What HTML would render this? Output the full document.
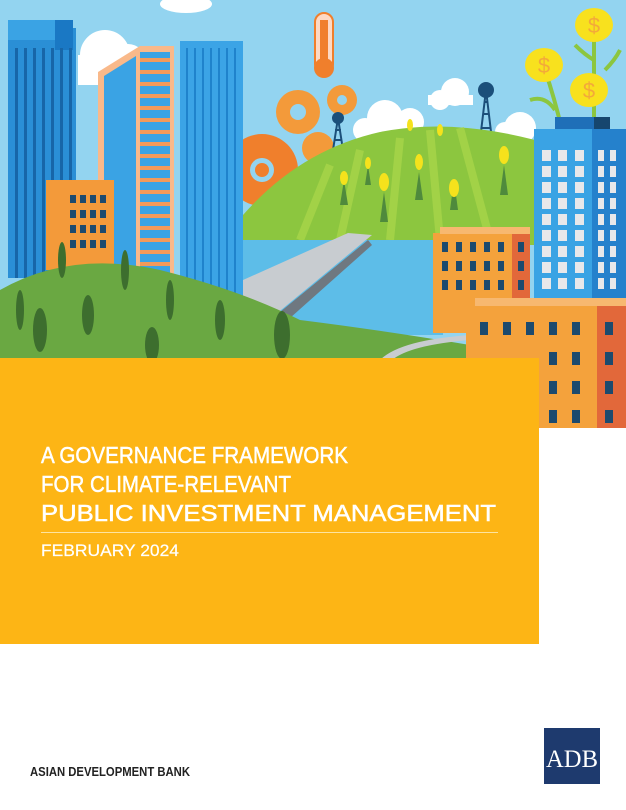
<!DOCTYPE html>
<html><head><meta charset="utf-8"><style>
html,body{margin:0;padding:0;background:#fff}
body{width:626px;height:810px;position:relative;overflow:hidden;font-family:"Liberation Sans",sans-serif}
svg{position:absolute;left:0;top:0}
</style></head><body>
<svg width="626" height="810" viewBox="0 0 626 810">
<rect x="0" y="0" width="626" height="430" fill="#93d4f0"/>
<rect x="539" y="428" width="87" height="382" fill="#fff"/>
<g fill="#fff">
<ellipse cx="186" cy="4" rx="26" ry="9"/>
<circle cx="105" cy="55" r="25"/><circle cx="128" cy="62" r="18"/><rect x="78" y="55" width="70" height="30"/>
<circle cx="455" cy="92" r="14"/><circle cx="440" cy="100" r="10"/><rect x="428" y="95" width="45" height="10"/>
<circle cx="385" cy="118" r="18"/><circle cx="410" cy="122" r="14"/><circle cx="365" cy="130" r="12"/>
<circle cx="520" cy="128" r="16"/><circle cx="505" cy="132" r="10"/>
</g>
<g fill="#f39a3a">
<circle cx="298" cy="112" r="22"/><circle cx="342" cy="100" r="15"/><circle cx="318" cy="148" r="16"/>
</g>
<circle cx="298" cy="112" r="8" fill="#93d4f0"/><circle cx="342" cy="100" r="5" fill="#93d4f0"/>
<circle cx="262" cy="170" r="36" fill="#f07f2c"/><circle cx="262" cy="170" r="12" fill="#93d4f0"/><circle cx="262" cy="170" r="7" fill="#f07f2c"/>
<rect x="315" y="13" width="18" height="60" rx="9" fill="#fdd9c4" stroke="#f07f2c" stroke-width="2"/>
<rect x="320" y="20" width="8" height="45" fill="#f07f2c"/><circle cx="324" cy="68" r="10" fill="#f07f2c"/>
<g stroke="#1b4f7a" stroke-width="2" fill="none">
<path d="M333 150 L338 118 L343 150 M334 140 H342 M335 130 H341"/>
<path d="M480 140 L486 90 L492 140 M481 128 H491 M483 114 H489 M484 102 H488"/>
</g>
<circle cx="338" cy="118" r="6" fill="#1b4f7a"/><circle cx="486" cy="90" r="8" fill="#1b4f7a"/>
<path d="M243 215 Q300 150 380 132 Q450 118 535 140 L535 245 L243 245 Z" fill="#8cc63f"/>
<g stroke="#a8d64a" stroke-width="8" fill="none" opacity=".8">
<path d="M300 240 L330 165"/><path d="M340 240 L360 150"/><path d="M390 240 L400 138"/><path d="M440 240 L430 130"/><path d="M490 240 L460 128"/>
</g>
<g fill="#4f8a3c">
<path d="M340 205 l4 -25 l4 25z"/><path d="M380 222 l4 -30 l4 30z"/><path d="M415 200 l4 -28 l4 28z"/><path d="M450 210 l4 -30 l4 30z"/><path d="M500 195 l4 -30 l4 30z"/><path d="M365 185 l3 -20 l3 20z"/>
</g>
<g fill="#f5e21c">
<ellipse cx="344" cy="178" rx="4" ry="7"/><ellipse cx="384" cy="182" rx="5" ry="9"/><ellipse cx="419" cy="162" rx="4" ry="8"/><ellipse cx="454" cy="188" rx="5" ry="9"/><ellipse cx="504" cy="155" rx="5" ry="9"/><ellipse cx="368" cy="163" rx="3" ry="6"/><ellipse cx="440" cy="130" rx="3" ry="6"/><ellipse cx="410" cy="125" rx="3" ry="6"/>
</g>
<rect x="243" y="240" width="200" height="95" fill="#5dbde8"/>
<path d="M243 280 L348 233 L372 235 L275 315 L243 318 Z" fill="#c8ccd0"/>
<path d="M280 312 L368 240 L372 245 L290 318 Z" fill="#6f7880"/>
<g stroke="#8cc63f" stroke-width="4" fill="none"><path d="M562 130 Q555 100 545 70"/><path d="M594 125 L594 35"/><path d="M530 100 Q545 95 555 110"/><path d="M605 70 Q615 60 620 50"/><path d="M575 45 Q585 55 594 60"/></g>
<g fill="#f8e11e"><ellipse cx="594" cy="25" rx="19" ry="17"/><ellipse cx="544" cy="65" rx="19" ry="17"/><ellipse cx="589" cy="90" rx="19" ry="17"/></g>
<g fill="#f3a93a" font-size="22" font-family="Liberation Sans" text-anchor="middle"><text x="594" y="33">$</text><text x="544" y="73">$</text><text x="589" y="98">$</text></g>
<rect x="8" y="28" width="68" height="250" fill="#2a8fd6"/>
<rect x="8" y="20" width="62" height="20" fill="#3aa3e4"/><rect x="55" y="20" width="18" height="30" fill="#1a78c4"/>
<g fill="#1766a8"><rect x="15" y="48" width="3" height="230"/><rect x="24" y="48" width="3" height="230"/><rect x="33" y="48" width="3" height="230"/><rect x="42" y="48" width="3" height="230"/><rect x="51" y="48" width="3" height="230"/><rect x="60" y="48" width="3" height="230"/><rect x="69" y="48" width="3" height="230"/></g>
<path d="M98 72 L140 46 L174 46 L174 285 L98 285 Z" fill="#f9b98a"/>
<path d="M104 76 L136 56 L136 285 L104 285 Z" fill="#3aa3e4"/>
<rect x="140" y="52" width="30" height="233" fill="#3aa3e4"/>
<g fill="#f39a5a"><rect x="140" y="58" width="30" height="4"/><rect x="140" y="70" width="30" height="4"/><rect x="140" y="82" width="30" height="4"/><rect x="140" y="94" width="30" height="4"/><rect x="140" y="106" width="30" height="4"/><rect x="140" y="118" width="30" height="4"/><rect x="140" y="130" width="30" height="4"/><rect x="140" y="142" width="30" height="4"/><rect x="140" y="154" width="30" height="4"/><rect x="140" y="166" width="30" height="4"/><rect x="140" y="178" width="30" height="4"/><rect x="140" y="190" width="30" height="4"/><rect x="140" y="202" width="30" height="4"/><rect x="140" y="214" width="30" height="4"/><rect x="140" y="226" width="30" height="4"/><rect x="140" y="238" width="30" height="4"/><rect x="140" y="250" width="30" height="4"/><rect x="140" y="262" width="30" height="4"/></g>
<rect x="180" y="41" width="63" height="270" fill="#3ba4e6"/>
<g fill="#1f83cc"><rect x="186" y="48" width="2" height="263"/><rect x="194" y="48" width="2" height="263"/><rect x="202" y="48" width="2" height="263"/><rect x="210" y="48" width="2" height="263"/><rect x="218" y="48" width="2" height="263"/><rect x="226" y="48" width="2" height="263"/><rect x="234" y="48" width="2" height="263"/></g>
<rect x="46" y="180" width="68" height="90" fill="#f39a3a"/>
<g fill="#1c4a6e"><rect x="70" y="195" width="6" height="8"/><rect x="80" y="195" width="6" height="8"/><rect x="90" y="195" width="6" height="8"/><rect x="100" y="195" width="6" height="8"/><rect x="70" y="210" width="6" height="8"/><rect x="80" y="210" width="6" height="8"/><rect x="90" y="210" width="6" height="8"/><rect x="100" y="210" width="6" height="8"/><rect x="70" y="225" width="6" height="8"/><rect x="80" y="225" width="6" height="8"/><rect x="90" y="225" width="6" height="8"/><rect x="100" y="225" width="6" height="8"/><rect x="70" y="240" width="6" height="8"/><rect x="80" y="240" width="6" height="8"/><rect x="90" y="240" width="6" height="8"/><rect x="100" y="240" width="6" height="8"/></g>
<path d="M0 290 Q70 250 160 270 Q240 290 300 320 Q380 330 470 345 L470 360 L0 360 Z" fill="#6aa842"/>
<path d="M380 360 Q400 340 470 335 L470 340 Q410 345 392 360Z" fill="#c8ccd0"/>
<g fill="#3d6e2e">
<ellipse cx="40" cy="330" rx="7" ry="22"/><ellipse cx="88" cy="315" rx="6" ry="20"/><ellipse cx="152" cy="345" rx="7" ry="18"/><ellipse cx="282" cy="335" rx="8" ry="24"/><ellipse cx="20" cy="310" rx="4" ry="20"/><ellipse cx="125" cy="270" rx="4" ry="20"/><ellipse cx="170" cy="300" rx="4" ry="20"/><ellipse cx="220" cy="320" rx="5" ry="20"/><ellipse cx="62" cy="260" rx="4" ry="18"/>
</g>
<rect x="555" y="117" width="55" height="14" fill="#1f6fb8"/><rect x="594" y="117" width="16" height="14" fill="#16466e"/>
<rect x="534" y="129" width="92" height="175" fill="#3aa3e4"/><rect x="592" y="129" width="34" height="175" fill="#2581cc"/>
<g fill="#e8e8ea">
<rect x="542" y="150" width="9" height="11"/><rect x="558" y="150" width="9" height="11"/><rect x="575" y="150" width="9" height="11"/><rect x="542" y="166" width="9" height="11"/><rect x="558" y="166" width="9" height="11"/><rect x="575" y="166" width="9" height="11"/><rect x="542" y="182" width="9" height="11"/><rect x="558" y="182" width="9" height="11"/><rect x="575" y="182" width="9" height="11"/><rect x="542" y="198" width="9" height="11"/><rect x="558" y="198" width="9" height="11"/><rect x="575" y="198" width="9" height="11"/><rect x="542" y="214" width="9" height="11"/><rect x="558" y="214" width="9" height="11"/><rect x="575" y="214" width="9" height="11"/><rect x="542" y="230" width="9" height="11"/><rect x="558" y="230" width="9" height="11"/><rect x="575" y="230" width="9" height="11"/><rect x="542" y="246" width="9" height="11"/><rect x="558" y="246" width="9" height="11"/><rect x="575" y="246" width="9" height="11"/><rect x="542" y="262" width="9" height="11"/><rect x="558" y="262" width="9" height="11"/><rect x="575" y="262" width="9" height="11"/><rect x="542" y="278" width="9" height="11"/><rect x="558" y="278" width="9" height="11"/><rect x="575" y="278" width="9" height="11"/>
<rect x="598" y="150" width="6" height="11"/><rect x="610" y="150" width="6" height="11"/><rect x="598" y="166" width="6" height="11"/><rect x="610" y="166" width="6" height="11"/><rect x="598" y="182" width="6" height="11"/><rect x="610" y="182" width="6" height="11"/><rect x="598" y="198" width="6" height="11"/><rect x="610" y="198" width="6" height="11"/><rect x="598" y="214" width="6" height="11"/><rect x="610" y="214" width="6" height="11"/><rect x="598" y="230" width="6" height="11"/><rect x="610" y="230" width="6" height="11"/><rect x="598" y="246" width="6" height="11"/><rect x="610" y="246" width="6" height="11"/><rect x="598" y="262" width="6" height="11"/><rect x="610" y="262" width="6" height="11"/><rect x="598" y="278" width="6" height="11"/><rect x="610" y="278" width="6" height="11"/>
</g>
<rect x="433" y="233" width="97" height="100" fill="#f4a23c"/><rect x="512" y="233" width="18" height="100" fill="#e2683a"/>
<rect x="440" y="227" width="90" height="7" fill="#f7b870"/>
<g fill="#1c4a6e"><rect x="442" y="242" width="6" height="10"/><rect x="456" y="242" width="6" height="10"/><rect x="470" y="242" width="6" height="10"/><rect x="484" y="242" width="6" height="10"/><rect x="498" y="242" width="6" height="10"/><rect x="518" y="242" width="6" height="10"/><rect x="442" y="261" width="6" height="10"/><rect x="456" y="261" width="6" height="10"/><rect x="470" y="261" width="6" height="10"/><rect x="484" y="261" width="6" height="10"/><rect x="498" y="261" width="6" height="10"/><rect x="518" y="261" width="6" height="10"/><rect x="442" y="280" width="6" height="10"/><rect x="456" y="280" width="6" height="10"/><rect x="470" y="280" width="6" height="10"/><rect x="484" y="280" width="6" height="10"/><rect x="498" y="280" width="6" height="10"/><rect x="518" y="280" width="6" height="10"/></g>
<rect x="466" y="300" width="160" height="128" fill="#f4a23c"/><rect x="597" y="300" width="29" height="128" fill="#e2683a"/>
<rect x="475" y="298" width="151" height="8" fill="#f7b870"/>
<g fill="#1c4a6e">
<rect x="480" y="322" width="8" height="13"/><rect x="503" y="322" width="8" height="13"/><rect x="526" y="322" width="8" height="13"/><rect x="549" y="322" width="8" height="13"/><rect x="572" y="322" width="8" height="13"/><rect x="605" y="322" width="8" height="13"/>
<rect x="549" y="352" width="8" height="13"/><rect x="572" y="352" width="8" height="13"/><rect x="605" y="352" width="8" height="13"/>
<rect x="549" y="381" width="8" height="13"/><rect x="572" y="381" width="8" height="13"/><rect x="605" y="381" width="8" height="13"/>
<rect x="549" y="410" width="8" height="13"/><rect x="572" y="410" width="8" height="13"/><rect x="605" y="410" width="8" height="13"/>
</g>
<rect x="0" y="358" width="539" height="286" fill="#fdb515"/>
<g fill="#fff" stroke="#fff" stroke-width="0.5" font-family="Liberation Sans, sans-serif" font-size="23">
<text x="41" y="463" textLength="307" lengthAdjust="spacingAndGlyphs">A GOVERNANCE FRAMEWORK</text>
<text x="41" y="492" textLength="250" lengthAdjust="spacingAndGlyphs">FOR CLIMATE-RELEVANT</text>
<text x="41" y="521" textLength="455" lengthAdjust="spacingAndGlyphs">PUBLIC INVESTMENT MANAGEMENT</text>
<text x="41" y="556" font-size="17" stroke-width="0.2" textLength="138" lengthAdjust="spacingAndGlyphs">FEBRUARY 2024</text>
</g>
<rect x="41" y="532" width="457" height="1" fill="#fde4a0"/>
<text x="30" y="776" font-family="Liberation Sans, sans-serif" font-weight="bold" font-size="13" fill="#222" textLength="160" lengthAdjust="spacingAndGlyphs">ASIAN DEVELOPMENT BANK</text>
<rect x="544" y="728" width="56" height="56" fill="#1e3a6e"/>
<text x="572" y="767" text-anchor="middle" font-family="Liberation Serif, serif" font-size="25" fill="#fff" textLength="52" lengthAdjust="spacingAndGlyphs">ADB</text>
</svg>
</body></html>
